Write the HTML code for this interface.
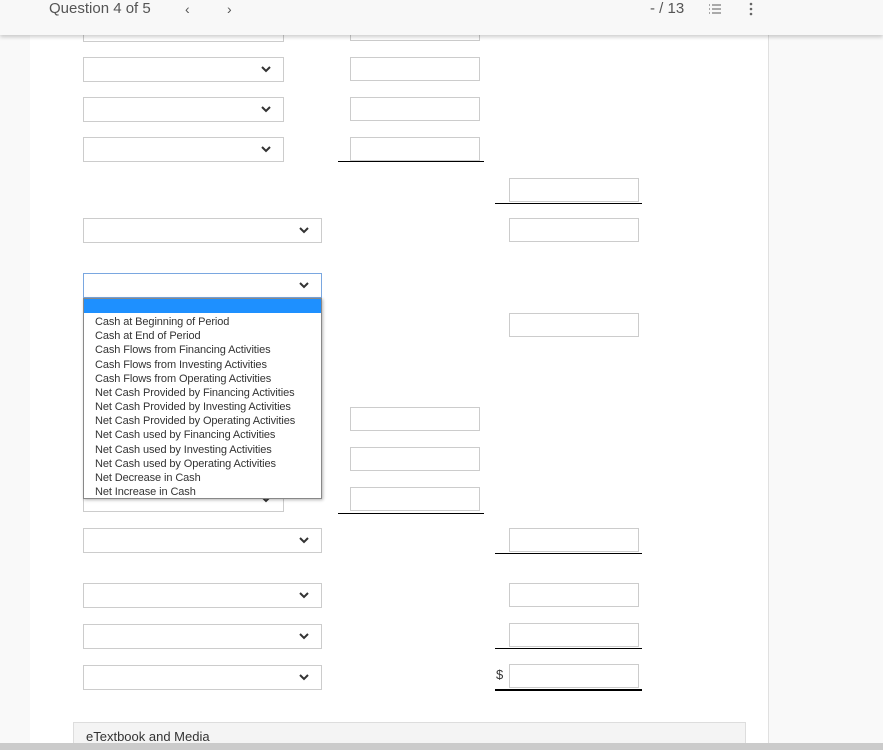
<!DOCTYPE html>
<html><head><style>
body{margin:0;width:883px;height:750px;overflow:hidden;background:#f9f9f9;font-family:"Liberation Sans",sans-serif;position:relative}
.main{position:absolute;left:30px;top:0;width:738px;height:750px;background:#fff;border-right:1px solid #e0e0e0}
.hdr{position:absolute;left:0;top:0;width:883px;height:35px;background:#f8f8f8;box-shadow:0 2px 4px rgba(0,0,0,.2);z-index:5;color:#555}
.a{position:absolute;box-sizing:border-box}
.sel{position:absolute;box-sizing:border-box;height:25px;border:1px solid #ccc;background:#fff}
.sel svg{position:absolute;right:12px;top:8px}
.inp{position:absolute;box-sizing:border-box;width:130px;height:24px;border:1px solid #ccc;background:#fff}
.ln{position:absolute;height:1px;background:#000}
.dd{position:absolute;left:83px;top:298px;width:239px;height:201px;background:#fff;border:1px solid #888;box-sizing:border-box;box-shadow:1px 1px 3px rgba(0,0,0,.3);z-index:3;font-size:11px;color:#333;line-height:14.17px}
.dd .hl{height:14px;background:#1e90ff;margin-bottom:2px}
.dd div.o{padding-left:11px;white-space:nowrap;letter-spacing:-0.1px}
</style></head><body>
<div class="main"></div>
<div class="hdr">
<div class="a" style="left:49px;top:0;font-size:15px">Question 4 of 5</div>
<div class="a" style="left:185px;top:1px;font-size:14px">&lsaquo;</div>
<div class="a" style="left:227px;top:1px;font-size:14px">&rsaquo;</div>
<div class="a" style="left:650px;top:0;font-size:15px">- / 13</div>
<svg class="a" style="left:708px;top:3px" width="14" height="12"><g stroke="#777" stroke-width="1.2"><line x1="4" y1="2" x2="13" y2="2"/><line x1="4" y1="6" x2="13" y2="6"/><line x1="4" y1="10" x2="13" y2="10"/><line x1="1" y1="2" x2="2" y2="2"/><line x1="1" y1="6" x2="2" y2="6"/><line x1="1" y1="10" x2="2" y2="10"/></g></svg>
<svg class="a" style="left:749px;top:2px" width="4" height="14"><circle cx="2" cy="2" r="1.3" fill="#666"/><circle cx="2" cy="7" r="1.3" fill="#666"/><circle cx="2" cy="12" r="1.3" fill="#666"/></svg>
</div>

<div class="sel" style="left:83px;top:17px;width:201px"></div>
<div class="inp" style="left:350px;top:17px"></div>

<div class="sel" style="left:83px;top:57px;width:201px"><svg width="10" height="7"><path d="M1 1l4 4 4-4" stroke="#333" stroke-width="2" fill="none"/></svg></div>
<div class="sel" style="left:83px;top:97px;width:201px"><svg width="10" height="7"><path d="M1 1l4 4 4-4" stroke="#333" stroke-width="2" fill="none"/></svg></div>
<div class="sel" style="left:83px;top:137px;width:201px"><svg width="10" height="7"><path d="M1 1l4 4 4-4" stroke="#333" stroke-width="2" fill="none"/></svg></div>
<div class="inp" style="left:350px;top:57px"></div>
<div class="inp" style="left:350px;top:97px"></div>
<div class="inp" style="left:350px;top:137px"></div>
<div class="ln" style="left:338px;top:161px;width:146px"></div>

<div class="inp" style="left:509px;top:178px"></div>
<div class="ln" style="left:495px;top:203px;width:147px"></div>
<div class="inp" style="left:509px;top:218px"></div>
<div class="sel" style="left:83px;top:218px;width:239px"><svg width="10" height="7"><path d="M1 1l4 4 4-4" stroke="#333" stroke-width="2" fill="none"/></svg></div>
<div class="sel" style="left:83px;top:273px;width:239px;border-color:#7aa7e0"><svg width="10" height="7"><path d="M1 1l4 4 4-4" stroke="#333" stroke-width="2" fill="none"/></svg></div>
<div class="inp" style="left:509px;top:313px"></div>

<div class="dd"><div class="hl"></div>
<div class="o">Cash at Beginning of Period</div>
<div class="o">Cash at End of Period</div>
<div class="o">Cash Flows from Financing Activities</div>
<div class="o">Cash Flows from Investing Activities</div>
<div class="o">Cash Flows from Operating Activities</div>
<div class="o">Net Cash Provided by Financing Activities</div>
<div class="o">Net Cash Provided by Investing Activities</div>
<div class="o">Net Cash Provided by Operating Activities</div>
<div class="o">Net Cash used by Financing Activities</div>
<div class="o">Net Cash used by Investing Activities</div>
<div class="o">Net Cash used by Operating Activities</div>
<div class="o">Net Decrease in Cash</div>
<div class="o">Net Increase in Cash</div>
</div>

<div class="sel" style="left:83px;top:487px;width:201px"><svg width="10" height="7"><path d="M1 1l4 4 4-4" stroke="#333" stroke-width="2" fill="none"/></svg></div>
<div class="inp" style="left:350px;top:407px"></div>
<div class="inp" style="left:350px;top:447px"></div>
<div class="inp" style="left:350px;top:487px"></div>
<div class="ln" style="left:338px;top:513px;width:146px"></div>

<div class="sel" style="left:83px;top:528px;width:239px"><svg width="10" height="7"><path d="M1 1l4 4 4-4" stroke="#333" stroke-width="2" fill="none"/></svg></div>
<div class="sel" style="left:83px;top:583px;width:239px"><svg width="10" height="7"><path d="M1 1l4 4 4-4" stroke="#333" stroke-width="2" fill="none"/></svg></div>
<div class="sel" style="left:83px;top:624px;width:239px"><svg width="10" height="7"><path d="M1 1l4 4 4-4" stroke="#333" stroke-width="2" fill="none"/></svg></div>
<div class="sel" style="left:83px;top:665px;width:239px"><svg width="10" height="7"><path d="M1 1l4 4 4-4" stroke="#333" stroke-width="2" fill="none"/></svg></div>
<div class="inp" style="left:509px;top:528px"></div>
<div class="ln" style="left:495px;top:553px;width:147px"></div>
<div class="inp" style="left:509px;top:583px"></div>
<div class="inp" style="left:509px;top:623px"></div>
<div class="ln" style="left:495px;top:648px;width:147px"></div>
<div class="a" style="left:496px;top:667px;font-size:13px;color:#333">$</div>
<div class="inp" style="left:509px;top:664px"></div>
<div class="ln" style="left:495px;top:689px;width:147px;height:2px"></div>

<div class="a" style="left:73px;top:722px;width:673px;height:28px;background:#f4f4f4;border:1px solid #ddd;font-size:13px;color:#333;padding:6px 0 0 12px">eTextbook and Media</div>
<div class="a" style="left:0;top:743px;width:883px;height:7px;background:#cbcbcb"></div>
</body></html>
